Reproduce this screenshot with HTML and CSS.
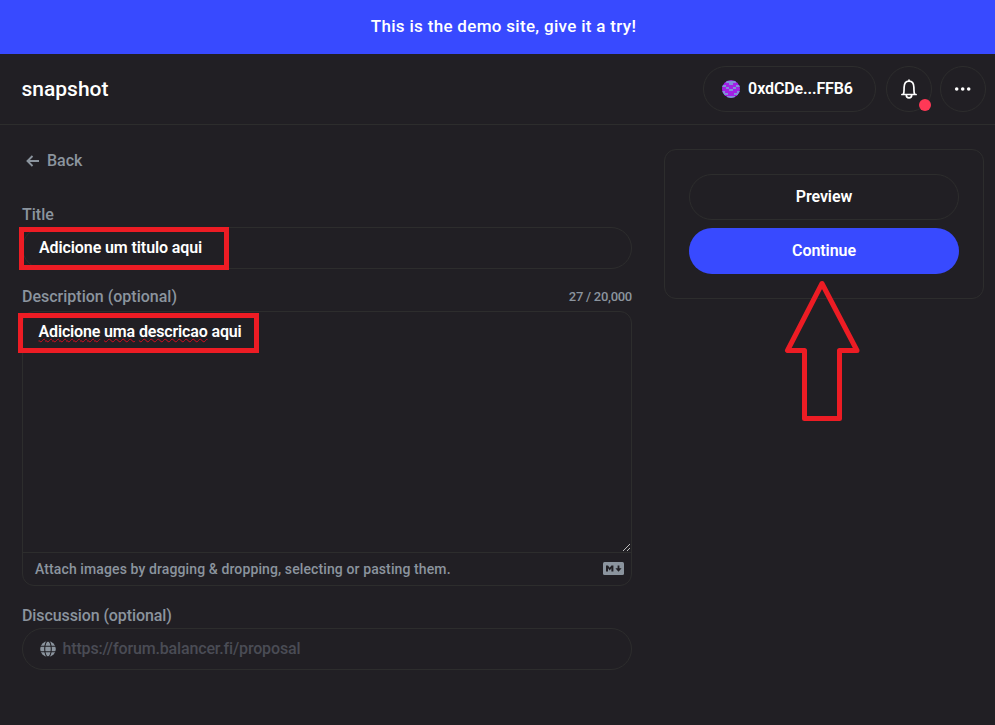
FILE: index.html
```html
<!DOCTYPE html>
<html lang="en">
<head>
<meta charset="utf-8">
<title>snapshot</title>
<link rel="stylesheet" href="styles.css">
</head>
<body>
<div class="banner"><span class="banner-text">This is the demo site, give it a try!</span></div>
<header class="topbar">
  <a class="brand">snapshot</a>
  <div class="actions">
    <button class="pill account">
      <svg class="avatar" width="18" height="18" viewBox="0 0 18 18"><defs><clipPath id="c"><circle cx="9" cy="9" r="9"/></clipPath></defs><g clip-path="url(#c)"><path fill="#a31fe6" d="M0 0h18v18H0z"/><path fill="#7f8fd8" d="M4 1h10v2h-3v2H7V3H4zM0 5h4v2H0zM14 5h4v2h-4zM4 7h3v2H4zM11 7h3v2h-3zM7 9h4v2H7zM0 11h3v2h3v2H0zM18 11h-3v2h-3v2h6zM5 16h8v2H5z"/></g></svg>
      <span class="address">0xdCDe...FFB6</span>
    </button>
    <button class="pill round">
      <svg class="bell" width="20" height="22" viewBox="0 0 20 22" fill="none" stroke="#fff" stroke-width="1.7" stroke-linejoin="round" stroke-linecap="round"><path d="M2.900 16.500h14.200M4.300 16.200c1-1.500.7-4.300.8-6.800C5.200 5.300 7 3.100 10 3.100s4.800 2.200 4.900 6.300c.1 2.500-.2 5.300.8 6.800M10 2v1M7.300 17a2.700 2.900 0 0 0 5.400 0"/></svg>
      <i class="dot"></i>
    </button>
    <button class="pill round">
      <svg width="18" height="6" viewBox="0 0 18 6" fill="#fff"><circle cx="2.700" cy="3" r="1.800"/><circle cx="8.700" cy="3" r="1.800"/><circle cx="14.700" cy="3" r="1.800"/></svg>
    </button>
  </div>
</header>
<main class="page">
  <section class="form">
    <a class="back"><svg width="14" height="12" viewBox="0 0 14 12" fill="none" stroke="#8b949e" stroke-width="1.900"><path d="M6.500 1 1.500 6l5 5M1.500 6H13"/></svg><span>Back</span></a>
    <div class="label-row"><span class="label">Title</span></div>
    <div class="input"><span class="value value-title">Adicione um titulo aqui</span><i class="mark mark-title"></i></div>
    <div class="label-row desc-row"><span class="label">Description (optional)</span><span class="count">27 / 20,000</span></div>
    <div class="editor">
      <div class="area">
        <span class="value value-desc"><u>Adicione</u> <u>uma</u> <u>descricao</u> aqui</span>
        <i class="mark mark-desc"></i>
        <svg class="grip" width="9" height="9" viewBox="0 0 9 9" stroke="#bbb" stroke-width="1"><path d="M1 8 8 1M5 8l3-3"/></svg>
      </div>
      <div class="attach"><span class="attach-text">Attach images by dragging &amp; dropping, selecting or pasting them.</span>
        <svg class="markdown" width="21" height="13" viewBox="0 0 21 13"><rect width="21" height="13" rx="1.500" fill="#8b949e"/><path d="M3 9.500V3.500h2l1.700 2.300 1.700-2.300h2v6h-2V6.300L6.700 8.400 5 6.300v3.200zM14.600 3.500h1.800v2.700h2.200l-3.100 3.500-3.100-3.500h2.200z" fill="#211f24"/></svg>
      </div>
    </div>
    <div class="label-row disc-row"><span class="label label-disc">Discussion (optional)</span></div>
    <div class="input link">
      <svg width="16" height="16" viewBox="0 0 16 16"><circle cx="8" cy="8" r="7.800" fill="#8b949e"/><path d="M0 5.300h16M0 10.700h16" fill="none" stroke="#211f24" stroke-width="1.100"/><ellipse cx="8" cy="8" rx="3.300" ry="8" fill="none" stroke="#211f24" stroke-width="1.100"/></svg>
      <span class="placeholder">https://forum.balancer.fi/proposal</span>
    </div>
  </section>
  <aside class="card">
    <button class="btn preview"><span>Preview</span></button>
    <button class="btn continue"><span>Continue</span></button>
    <svg class="arrow" width="76" height="142" viewBox="0 0 76 142"><path d="M38 4.500 3.500 71.500H20.500V139.500H55.500V71.500H73Z" fill="none" stroke="#ed1c24" stroke-width="5" stroke-linejoin="round"/></svg>
  </aside>
</main>
</body>
</html>
```
FILE: styles.css
```css
* { box-sizing: border-box; }
body { margin: 0; height: 725px; overflow: hidden; background: #211f24; color: #fff; font: 500 16px/24px Roboto, "Liberation Sans", sans-serif; }
button { margin: 0; padding: 0; font: inherit; color: inherit; background: none; border: 0; }
span { white-space: nowrap; }
.banner { height: 54px; display: flex; align-items: center; justify-content: center; padding: 0 0 2px 12px; background: #384aff; font-size: 17px; letter-spacing: .31px; }
.topbar { height: 71px; display: flex; align-items: center; justify-content: space-between; padding: 0 9px 0 21.5px; border-bottom: 1px solid #2d2d2d; }
.brand { font-size: 21px; }
.actions { display: flex; }
.pill { position: relative; height: 46px; display: flex; align-items: center; justify-content: center; border: 1px solid #2d2d2d; border-radius: 23px; }
.account { width: 173px; gap: 8px; margin-right: 10px; padding-right: 4px; }
.address { font-weight: 600; letter-spacing: -.1px; }
.round { width: 46px; }
.round + .round { margin-left: 8px; }
.bell { margin: 0 1px 1px 0; }
.dot { position: absolute; right: 0; bottom: 0; width: 12px; height: 12px; border-radius: 50%; background: #ff3856; }
.page { display: grid; grid-template-columns: 610px 320px; column-gap: 32px; padding: 0 11px 0 22px; }
.back { height: 24px; margin: 24px 0 30px 4px; display: flex; align-items: center; gap: 7px; color: #8b949e; }
.label-row { height: 24px; display: flex; align-items: center; justify-content: space-between; color: #8b949e; }
.desc-row { margin: 16px 0 2px; }
.disc-row { margin-top: 18px; }
.label-disc { letter-spacing: -.1px; }
.count { font-size: 13px; letter-spacing: -.27px; }
.input { position: relative; height: 42px; display: flex; align-items: center; border: 1px solid #2d2d2d; border-radius: 21px; padding: 0 16px; }
.link { gap: 7px; padding-left: 16.5px; }
.placeholder { color: #4a4c55; letter-spacing: -.15px; }
.editor { height: 275px; border: 1px solid #2d2d2d; border-radius: 12px; }
.area { position: relative; height: 240px; padding: 8px 15.5px; }
.value { color: #fff; font-weight: 600; }
.value-title { letter-spacing: -.1px; }
.value-desc { letter-spacing: -.15px; }
.value u { text-decoration: underline wavy #d01020 1px; text-underline-offset: 1px; text-decoration-skip-ink: none; }
.attach { height: 33px; display: flex; align-items: center; justify-content: space-between; padding: 0 7px 0 12px; border-top: 1px solid #2d2d2d; color: #8b949e; font-size: 14px; letter-spacing: .11px; }
.markdown { margin-bottom: 2px; }
.mark { position: absolute; border: 5px solid #ed1c24; }
.mark-title { left: -4px; top: -1px; width: 210px; height: 43px; }
.mark-desc { left: -5px; top: 1px; width: 241px; height: 40px; }
.grip { position: absolute; right: 0; bottom: 0; }
.card { position: relative; height: 150px; margin-top: 24px; border: 1px solid #2d2d2d; border-radius: 12px; padding: 24px; display: flex; flex-direction: column; gap: 8px; }
.btn { height: 46px; border-radius: 23px; font-weight: 600; letter-spacing: -.05px; }
.preview { border: 1px solid #2d2d2d; }
.continue { background: #384aff; }
.arrow { position: absolute; left: 119px; top: 129px; }
```
